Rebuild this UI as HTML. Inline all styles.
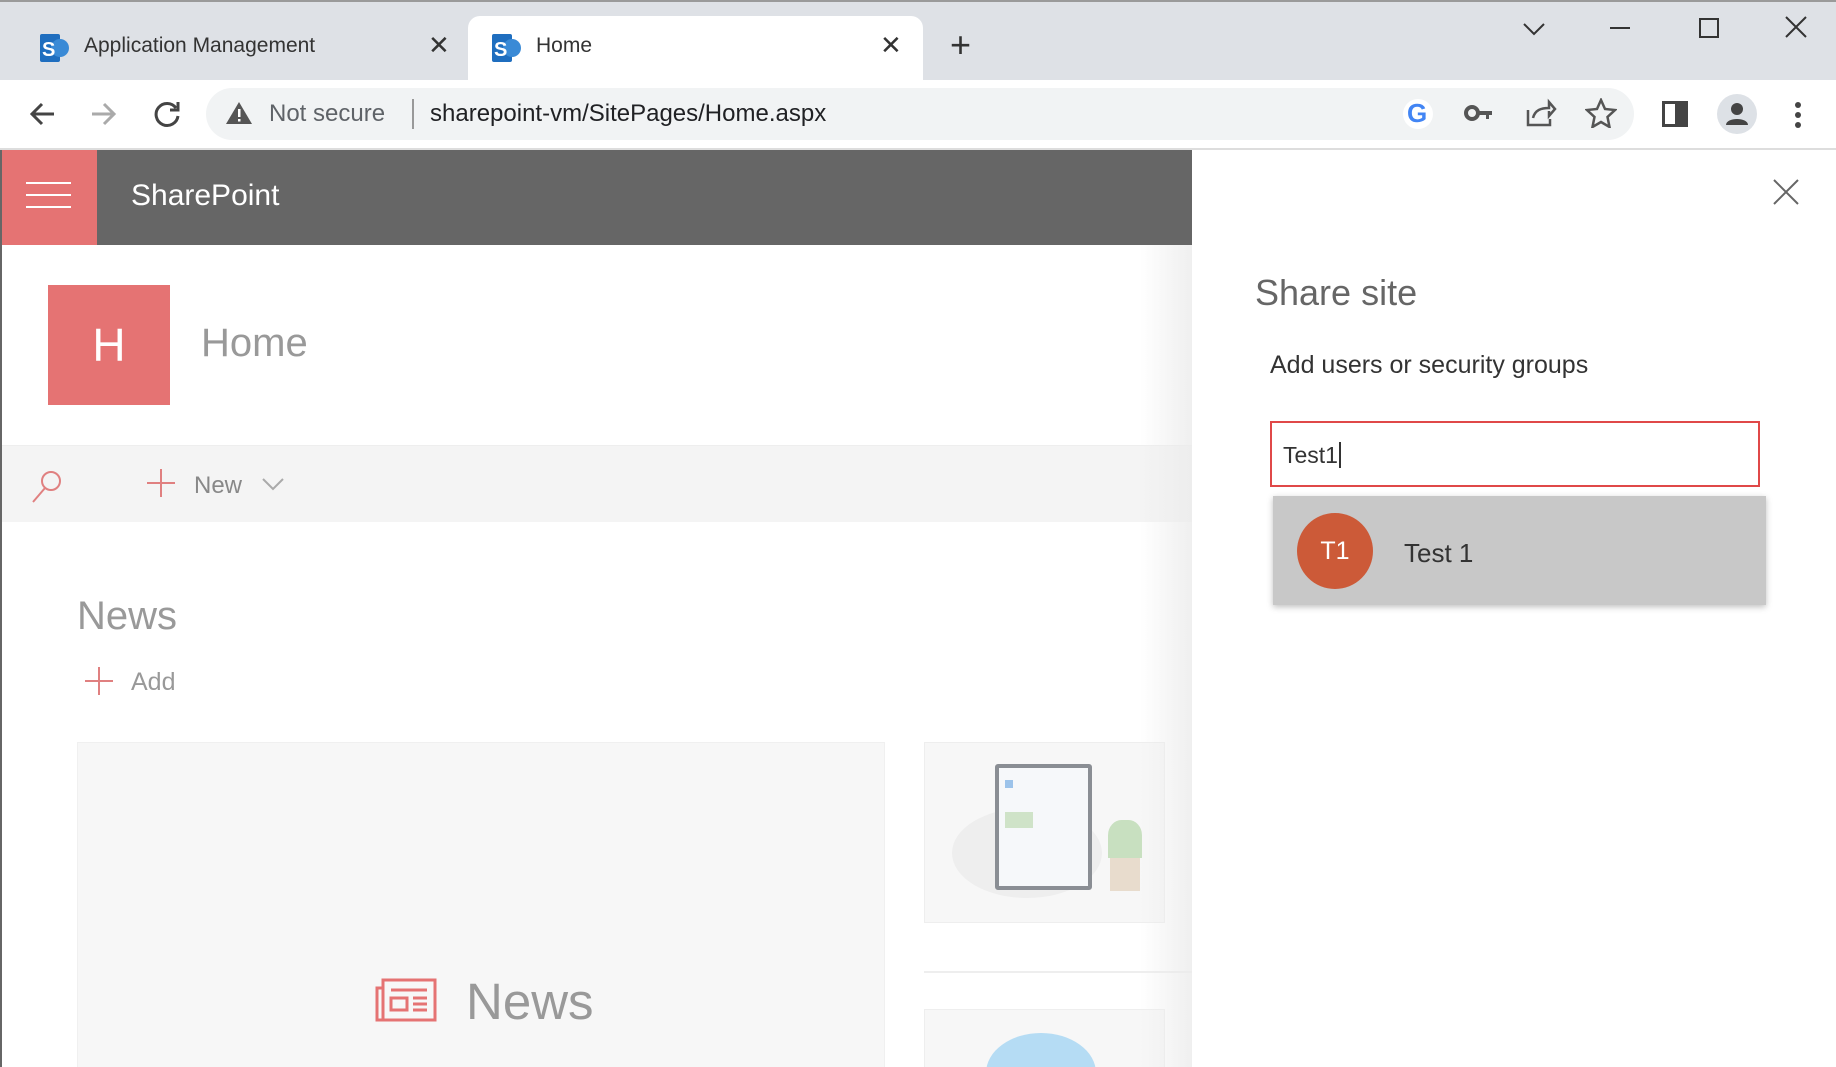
<!DOCTYPE html>
<html><head><meta charset="utf-8"><style>
*{box-sizing:border-box;margin:0;padding:0}
html{width:1836px;height:1067px;overflow:hidden}
body{width:1836px;height:1067px;overflow:hidden;position:relative;font-family:"Liberation Sans",sans-serif;background:#fff}
.a{position:absolute}
</style></head><body>
<!-- tab strip -->
<div class="a" style="left:0;top:0;width:1836px;height:80px;background:#dee1e6;border-top:2px solid #9a9a9a"></div>
<div class="a" style="left:468px;top:16px;width:455px;height:66px;background:#fff;border-radius:12px 12px 0 0"></div>
<svg class="a" style="left:38px;top:32px" width="32" height="32" viewBox="0 0 32 32"><rect x="2" y="2" width="20" height="28" rx="2" fill="#1f6ebf"/><circle cx="22" cy="16" r="9" fill="#3a8ad6"/><text x="4" y="24" font-size="20" font-weight="bold" fill="#fff" font-family="Liberation Sans">S</text></svg>
<div class="a" style="left:84px;top:34px;font-size:21px;color:#333">Application Management</div>
<div class="a" style="left:428px;top:30px;font-size:26px;color:#333">✕</div>
<svg class="a" style="left:490px;top:32px" width="32" height="32" viewBox="0 0 32 32"><rect x="2" y="2" width="20" height="28" rx="2" fill="#1f6ebf"/><circle cx="22" cy="16" r="9" fill="#3a8ad6"/><text x="4" y="24" font-size="20" font-weight="bold" fill="#fff" font-family="Liberation Sans">S</text></svg>
<div class="a" style="left:536px;top:34px;font-size:21px;color:#333">Home</div>
<div class="a" style="left:880px;top:30px;font-size:26px;color:#333">✕</div>
<div class="a" style="left:950px;top:24px;font-size:36px;color:#333">+</div>
<svg class="a" style="left:1520px;top:16px" width="240" height="24" viewBox="0 0 240 24" stroke="#333" stroke-width="2" fill="none"><path d="M4 8l10 10 10-10"/><path d="M90 12h20"/><rect x="180" y="3" width="18" height="18"/></svg>
<svg class="a" style="left:1783px;top:14px" width="26" height="26" viewBox="0 0 26 26" stroke="#333" stroke-width="2"><path d="M3 3l20 20M23 3L3 23"/></svg>
<!-- address row -->
<div class="a" style="left:0;top:80px;width:1836px;height:70px;background:#fff;border-bottom:2px solid #ddd"></div>
<svg class="a" style="left:26px;top:98px" width="160" height="32" viewBox="0 0 160 32" fill="none" stroke-width="3"><path d="M28 16H6M16 6L6 16l10 10" stroke="#444"/><path d="M66 16h22M78 6l10 10-10 10" stroke="#aaa"/><path d="M150 10a11 11 0 1 0 2 8" stroke="#444"/><path d="M152 4v8h-8" stroke="#444"/></svg>
<div class="a" style="left:206px;top:88px;width:1428px;height:52px;background:#f1f3f4;border-radius:26px"></div>
<svg class="a" style="left:225px;top:100px" width="28" height="26" viewBox="0 0 28 26"><path d="M14 2L27 24H1z" fill="#555"/><rect x="13" y="9" width="2.5" height="8" fill="#fff"/><rect x="13" y="19" width="2.5" height="2.5" fill="#fff"/></svg>
<div class="a" style="left:269px;top:100px;font-size:24px;color:#5f6368">Not secure</div>
<div class="a" style="left:412px;top:99px;width:2px;height:30px;background:#999"></div>
<div class="a" style="left:430px;top:100px;font-size:24px;color:#202124">sharepoint-vm/SitePages/Home.aspx</div>
<div class="a" style="left:1403px;top:99px;width:30px;height:30px;border-radius:50%;background:#fff"></div>
<div class="a" style="left:1407px;top:98px;font-size:26px;font-weight:bold;color:#4285f4">G</div>
<svg class="a" style="left:1464px;top:100px" width="30" height="26" viewBox="0 0 30 26"><circle cx="8" cy="13" r="6" fill="none" stroke="#555" stroke-width="4"/><path d="M14 11h14v4h-3v4h-3v-4h-8z" fill="#555"/></svg>
<svg class="a" style="left:1525px;top:98px" width="32" height="30" viewBox="0 0 32 30" fill="none" stroke="#555" stroke-width="2.5"><path d="M3 12v15h22v-6"/><path d="M8 20c2-8 8-10 16-10V4l6 7-6 7v-5"/></svg>
<svg class="a" style="left:1585px;top:98px" width="32" height="30" viewBox="0 0 32 30" fill="none" stroke="#555" stroke-width="2.5"><path d="M16 2l4 9 10 1-7.5 7 2 10L16 24l-8.5 5 2-10L2 12l10-1z"/></svg>
<div class="a" style="left:1662px;top:101px;width:26px;height:26px;border:3px solid #444"></div>
<div class="a" style="left:1675px;top:101px;width:13px;height:26px;background:#444"></div>
<div class="a" style="left:1717px;top:94px;width:40px;height:40px;border-radius:50%;background:#dde1e6"></div>
<svg class="a" style="left:1725px;top:101px" width="24" height="24" viewBox="0 0 24 24" fill="#444"><circle cx="12" cy="8" r="6"/><path d="M1 24c0-8 22-8 22 0z"/></svg>
<svg class="a" style="left:1792px;top:100px" width="12" height="30" viewBox="0 0 12 30" fill="#444"><circle cx="6" cy="5" r="3"/><circle cx="6" cy="15" r="3"/><circle cx="6" cy="25" r="3"/></svg>
<!-- SP header -->
<div class="a" style="left:0;top:150px;width:1192px;height:95px;background:#666"></div>
<div class="a" style="left:0;top:150px;width:97px;height:95px;background:#e57373"></div>
<div class="a" style="left:26px;top:182px;width:45px;height:2px;background:#fff;box-shadow:0 12px 0 #fff,0 24px 0 #fff"></div>
<div class="a" style="left:131px;top:179px;font-size:30px;color:#fff">SharePoint</div>
<!-- page -->
<div class="a" style="left:0;top:150px;width:2px;height:917px;background:#666"></div>
<div class="a" style="left:48px;top:285px;width:122px;height:120px;background:#e57373"></div>
<div class="a" style="left:48px;top:318px;width:122px;text-align:center;font-size:46px;color:#fff;font-weight:300">H</div>
<div class="a" style="left:201px;top:321px;font-size:40px;color:#999">Home</div>
<div class="a" style="left:2px;top:445px;width:1190px;height:77px;background:#f4f4f4;border-top:1px solid #eee"></div>
<svg class="a" style="left:30px;top:468px" width="36" height="36" viewBox="0 0 36 36" fill="none" stroke="#e08080" stroke-width="2"><circle cx="21" cy="13" r="9"/><path d="M15 20L3 34"/></svg>
<svg class="a" style="left:146px;top:468px" width="30" height="30" viewBox="0 0 30 30" stroke="#e08080" stroke-width="2"><path d="M15 1v28M1 15h28"/></svg>
<div class="a" style="left:194px;top:472px;font-size:24px;color:#888">New</div>
<svg class="a" style="left:262px;top:477px" width="22" height="14" viewBox="0 0 22 14" fill="none" stroke="#aaa" stroke-width="2"><path d="M1 2l10 10 10-10"/></svg>
<div class="a" style="left:77px;top:594px;font-size:40px;color:#999">News</div>
<svg class="a" style="left:84px;top:666px" width="30" height="30" viewBox="0 0 30 30" stroke="#e08080" stroke-width="2"><path d="M15 1v28M1 15h28"/></svg>
<div class="a" style="left:131px;top:668px;font-size:25px;color:#999">Add</div>
<div class="a" style="left:77px;top:742px;width:808px;height:340px;background:#f7f7f7;border:1px solid #f0f0f0"></div>
<svg class="a" style="left:375px;top:978px" width="62" height="44" viewBox="0 0 62 44" fill="none" stroke="#e57373" stroke-width="3"><rect x="8" y="2" width="52" height="40"/><path d="M8 10H2v32h6"/><rect x="16" y="20" width="16" height="12"/><path d="M38 20h14M38 26h14M38 32h14M16 12h36"/></svg>
<div class="a" style="left:466px;top:972px;font-size:51px;color:#999">News</div>
<div class="a" style="left:924px;top:742px;width:241px;height:181px;background:#f7f7f7;border:1px solid #eee"></div>
<div class="a" style="left:952px;top:808px;width:150px;height:90px;border-radius:50%;background:#eee"></div>
<div class="a" style="left:995px;top:764px;width:97px;height:126px;background:#f6f8fa;border:4px solid #8a8e94;border-radius:3px"></div>
<div class="a" style="left:1005px;top:780px;width:8px;height:8px;background:#9cc3ea"></div>
<div class="a" style="left:1005px;top:812px;width:28px;height:16px;background:#cfe3c8"></div>
<div class="a" style="left:1110px;top:855px;width:30px;height:36px;background:#e8dccd"></div>
<div class="a" style="left:1108px;top:820px;width:34px;height:38px;background:#c8e0c0;border-radius:40% 40% 0 0"></div>
<div class="a" style="left:924px;top:971px;width:268px;height:2px;background:#eee"></div>
<div class="a" style="left:924px;top:1009px;width:241px;height:70px;background:#f7f7f7;border:1px solid #eee;overflow:hidden"><div style="position:absolute;left:61px;top:23px;width:110px;height:80px;border-radius:50%;background:#b5dcf4"></div></div>
<div class="a" style="left:1140px;top:245px;width:52px;height:822px;background:linear-gradient(to right,rgba(235,235,235,0),rgba(235,235,235,.8))"></div>
<!-- panel -->
<div class="a" style="left:1192px;top:150px;width:644px;height:917px;background:#fff"></div>
<svg class="a" style="left:1773px;top:179px" width="26" height="26" viewBox="0 0 26 26" stroke="#666" stroke-width="2"><path d="M1 1l24 24M25 1L1 25"/></svg>
<div class="a" style="left:1255px;top:272px;font-size:36px;color:#666;font-weight:300">Share site</div>
<div class="a" style="left:1270px;top:351px;font-size:25px;color:#333">Add users or security groups</div>
<div class="a" style="left:1270px;top:421px;width:490px;height:66px;border:2px solid #e04848;background:#fff"></div>
<div class="a" style="left:1283px;top:442px;font-size:23px;color:#333">Test1<span style="display:inline-block;width:2px;height:26px;background:#333;vertical-align:-5px;margin-left:1px"></span></div>
<div class="a" style="left:1273px;top:496px;width:493px;height:109px;background:#c8c8c8;box-shadow:0 2px 6px rgba(0,0,0,.25)"></div>
<div class="a" style="left:1297px;top:513px;width:76px;height:76px;border-radius:50%;background:#cc5a38;color:#fff;font-size:25px;text-align:center;line-height:76px">T1</div>
<div class="a" style="left:1404px;top:538px;font-size:26px;color:#333">Test 1</div>
</body></html>
